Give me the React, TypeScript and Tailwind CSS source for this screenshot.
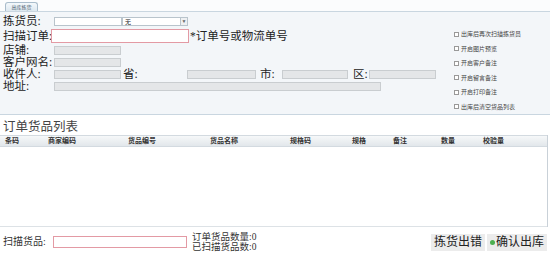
import { useState } from "react";

export default function App() {
  const [orderNo, setOrderNo] = useState("");
  const [scanCode, setScanCode] = useState("");

  const options = [
    "出库后再次扫描拣货员",
    "开启图片预览",
    "开启客户备注",
    "开启留言备注",
    "开启打印备注",
    "出库后清空货品列表",
  ];

  const columns = ["条码", "商家编码", "货品编号", "货品名称", "规格码", "规格", "备注", "数量", "校验量"];

  const label = "shrink-0 whitespace-nowrap";
  const grayBox = "shrink-0 h-[9px] bg-[#e4e6e8] border border-[#c9cdd0]";

  return (
    <div className="w-[550px] h-[258px] overflow-hidden bg-white text-[#222] font-['Liberation_Serif','Noto_Sans_CJK_SC',serif]">
      {/* Tab strip */}
      <div className="h-[11px] bg-[#fbfcfd] flex items-end pl-[5px]">
        <div className="h-[9px] w-[33px] border border-b-0 border-[#a9bccb] rounded-t-[3px] bg-gradient-to-b from-[#f4f8fb] to-[#dde8f0] flex items-center justify-center text-[5px] leading-none text-[#456]">
          出库拣货
        </div>
      </div>

      {/* Form panel */}
      <div className="h-[104px] border-t border-b border-[#c9d6e0] bg-[#f3f6f9] flex">
        <div className="w-[450px] shrink-0 pt-[3px] text-[11.5px] leading-[11px]">
          {/* 拣货员 */}
          <div className="h-[13px] flex items-center pl-[3px]">
            <span className={`${label} w-[51px]`}>拣货员:</span>
            <div className="shrink-0 h-[9px] w-[68px] bg-white border border-[#b9c4cc]" />
            <div className="shrink-0 h-[9px] w-[66px] bg-white border border-[#b9c4cc] flex items-center justify-between">
              <span className="text-[6px] leading-none pl-[2px]">无</span>
              <span className="h-full w-[7px] border-l border-[#b9c4cc] bg-[#eef0f2] text-[5px] leading-[8px] text-center text-[#666]">▼</span>
            </div>
          </div>
          {/* 扫描订单 */}
          <div className="h-[16px] flex items-center pl-[3px]">
            <span className={`${label} w-[48px]`}>扫描订单:</span>
            <input
              value={orderNo}
              onChange={(e) => setOrderNo(e.target.value)}
              className="shrink-0 h-[14px] w-[138px] bg-white border border-[#e39aa4] outline-none"
            />
            <span className={`${label} ml-[1px]`}>*订单号或物流单号</span>
          </div>
          {/* 店铺 */}
          <div className="h-[12px] flex items-center pl-[3px]">
            <span className={`${label} w-[51px]`}>店铺:</span>
            <div className={`${grayBox} w-[67px]`} />
          </div>
          {/* 客户网名 */}
          <div className="h-[12px] flex items-center pl-[3px]">
            <span className={`${label} w-[51px]`}>客户网名:</span>
            <div className={`${grayBox} w-[67px]`} />
          </div>
          {/* 收件人 */}
          <div className="h-[12px] flex items-center pl-[3px]">
            <span className={`${label} w-[51px]`}>收件人:</span>
            <div className={`${grayBox} w-[67px]`} />
            <span className={`${label} ml-[2px] w-[64px]`}>省:</span>
            <div className={`${grayBox} w-[69px]`} />
            <span className={`${label} ml-[4px] w-[22px]`}>市:</span>
            <div className={`${grayBox} w-[66px]`} />
            <span className={`${label} ml-[5px] w-[16px]`}>区:</span>
            <div className={`${grayBox} w-[67px]`} />
          </div>
          {/* 地址 */}
          <div className="h-[12px] flex items-center pl-[3px]">
            <span className={`${label} w-[51px]`}>地址:</span>
            <div className={`${grayBox} w-[327px]`} />
          </div>
        </div>

        <div className="pt-[15px] pl-[4px] flex flex-col">
          {options.map((text) => (
            <label key={text} className="h-[14.6px] flex items-center gap-[2px] text-[6px] leading-none text-[#444] whitespace-nowrap font-['Noto_Sans_CJK_SC',sans-serif]">
              <span className="w-[5px] h-[5px] border border-[#999] bg-white" />
              {text}
            </label>
          ))}
        </div>
      </div>

      {/* Goods list */}
      <div className="h-[20px] flex items-end pl-[3px] pb-[1px] text-[12.5px] leading-[13px] text-[#444]">
        订单货品列表
      </div>
      <div className="w-[548px] border-r border-[#c9d1d8]">
        <div className="h-[12px] grid grid-cols-[43px_80px_82px_80px_62px_41px_48px_42px_64px] pl-[5px] items-center border-t border-b border-[#d3dae0] bg-gradient-to-b from-[#f6f8f9] to-[#e2e7eb] text-[7px] leading-none font-bold text-[#333]">
          {columns.map((c) => (
            <span key={c}>{c}</span>
          ))}
        </div>
        <div className="h-[80px] bg-white border-b border-[#dde2e6]" />
      </div>

      {/* Bottom bar */}
      <div className="h-[30px] flex items-center pl-[3px] pr-[3px]">
        <span className="shrink-0 whitespace-nowrap w-[50px] text-[10px] leading-none text-[#333]">扫描货品:</span>
        <input
          value={scanCode}
          onChange={(e) => setScanCode(e.target.value)}
          className="shrink-0 h-[12px] w-[134px] bg-white border border-[#e39aa4] outline-none"
        />
        <div className="ml-[5px] flex flex-col gap-[0px] text-[9.5px] leading-[10px] text-[#333] whitespace-nowrap">
          <span>订单货品数量:0</span>
          <span>已扫描货品数:0</span>
        </div>
        <div className="ml-auto flex gap-[2px]">
          <button className="h-[17px] px-[3px] bg-[#ececec] text-[12px] leading-none text-[#222] whitespace-nowrap">拣货出错</button>
          <button className="h-[17px] px-[3px] bg-[#ececec] text-[12px] leading-none text-[#222] whitespace-nowrap flex items-center gap-[1px]">
            <span className="w-[5px] h-[5px] rounded-full bg-[#4caf50]" />
            确认出库
          </button>
        </div>
      </div>
    </div>
  );
}
